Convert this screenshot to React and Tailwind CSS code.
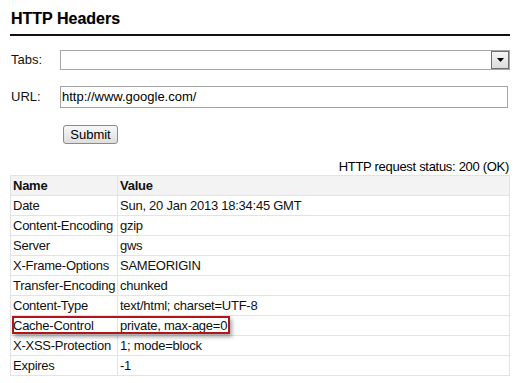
import React from "react";

const headers = [
  ["Date", "Sun, 20 Jan 2013 18:34:45 GMT"],
  ["Content-Encoding", "gzip"],
  ["Server", "gws"],
  ["X-Frame-Options", "SAMEORIGIN"],
  ["Transfer-Encoding", "chunked"],
  ["Content-Type", "text/html; charset=UTF-8"],
  ["Cache-Control", "private, max-age=0"],
  ["X-XSS-Protection", "1; mode=block"],
  ["Expires", "-1"],
];

const Row = ({ name, value, head }) => (
  <div
    className={`flex h-[20px] border-b border-[#e3e3e3] leading-[19px] tracking-[-0.25px] ${
      head ? "bg-[#f3f3f3] font-bold" : "bg-white"
    }`}
  >
    <div className="w-[107px] shrink-0 border-r border-[#e3e3e3] pl-[2px] whitespace-nowrap">
      {name}
    </div>
    <div className="flex-1 pl-[2px] whitespace-nowrap">{value}</div>
  </div>
);

export default function App() {
  return (
    <div className="min-h-[383px] bg-white px-[10px] pt-[9px] font-['Liberation_Sans',Arial,sans-serif] text-[13px] text-[#111]">
      <h1 className="pl-px text-[16px] font-bold leading-[20px] text-black [text-shadow:0_0_1px_rgba(0,0,0,0.25)]">
        HTTP Headers
      </h1>
      <div className="mt-[5px] h-[2px] w-[500px] bg-[#111]" />

      {/* tabs */}
      <div className="mt-[14px] flex">
        <div className="w-[50px] pl-px leading-[20px]">Tabs:</div>
        <div className="flex h-[20px] w-[451px] items-stretch justify-end border border-[#a5a5a5] bg-white">
          <div className="flex w-[18px] items-center justify-center border border-[#6f6f6f] bg-gradient-to-b from-[#f6f6f6] to-[#dcdcdc]">
            <svg width="7" height="4" viewBox="0 0 7 4">
              <path d="M0 0h7L3.5 4z" fill="#000" />
            </svg>
          </div>
        </div>
      </div>

      {/* url */}
      <div className="mt-[16px] flex">
        <div className="mt-px w-[50px] pl-px leading-[20px]">URL:</div>
        <div className="flex h-[22px] w-[448px] items-center border border-[#a5a5a5] bg-white pl-px text-black">
          http://www.google.com/
        </div>
      </div>

      <button className="ml-[53px] mt-[17px] flex h-[19px] w-[55px] items-center justify-center rounded-[3px] border border-[#8a8a8a] bg-gradient-to-b from-[#f7f7f7] to-[#dedede] text-[13px] leading-none text-black">
        Submit
      </button>

      <div className="mt-[14px] w-[500px] pr-px text-right leading-[17px] tracking-[-0.3px] text-black">
        HTTP request status: 200 (OK)
      </div>

      <div className="relative w-[500px] border-l border-r border-t border-[#e3e3e3]">
        <Row name="Name" value="Value" head />
        {headers.map(([n, v]) => (
          <Row key={n} name={n} value={v} />
        ))}
        <div className="absolute left-[1px] top-[140px] h-[18px] w-[218px] border-2 border-[#b0171d] shadow-[2px_3px_4px_rgba(0,0,0,0.35)]" />
      </div>
    </div>
  );
}
